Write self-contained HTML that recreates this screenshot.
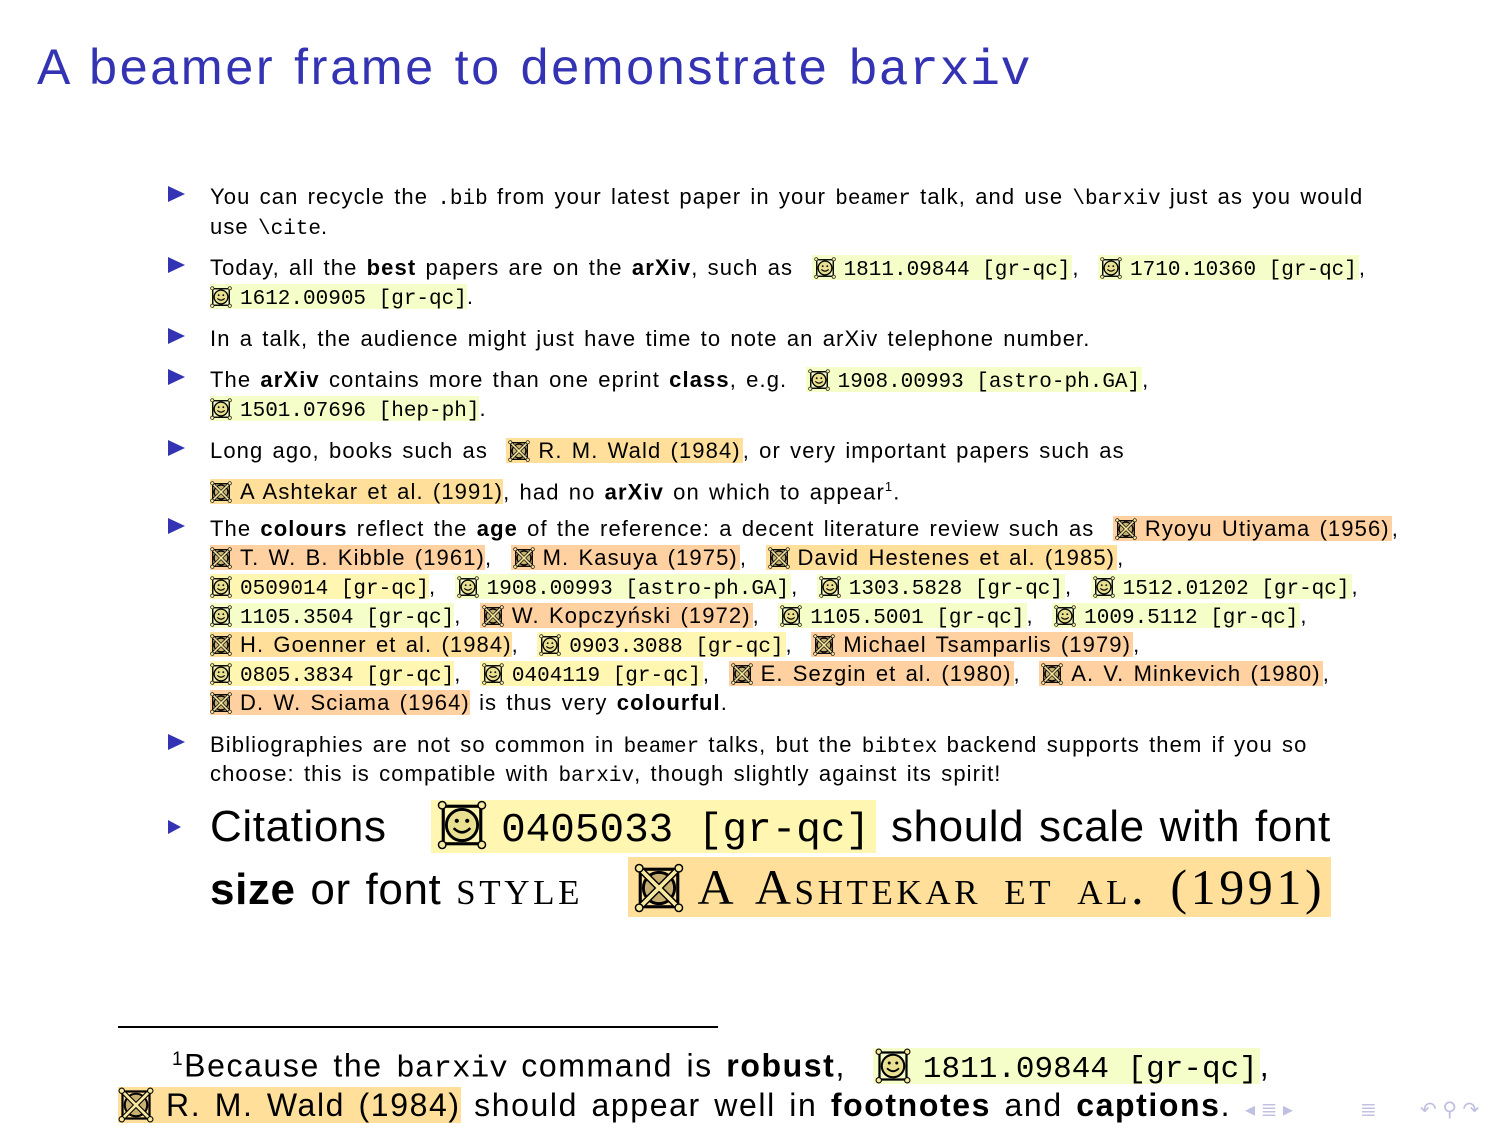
<!DOCTYPE html>
<html><head><meta charset="utf-8"><style>
body{margin:0;width:1512px;height:1134px;background:#fff;position:relative;overflow:hidden;font-family:"Liberation Sans",sans-serif;color:#000}
.t{position:absolute;left:37px;top:38px;font-size:50px;color:#3333b3;white-space:nowrap;letter-spacing:2.8px;word-spacing:2px}
.t .m{letter-spacing:0.5px}
.m{font-family:"Liberation Mono",monospace;letter-spacing:0;word-spacing:0}
.l{position:absolute;left:210px;white-space:nowrap;font-size:22px;line-height:26px;letter-spacing:1.1px;word-spacing:2px}
.l .m{font-size:21px}
.b{position:absolute;left:168px;width:0;height:0;border-top:8px solid transparent;border-bottom:8px solid transparent;border-left:17px solid #3333b3}
.hg{background:#f5fec8}.hy{background:#fff6b2}.ho{background:#ffdf9a}.hp{background:#ffd0a0}
.h{padding:0 2px}
svg.i{width:22px;height:22px;vertical-align:-4px;margin-right:8px}
.big{font-size:44px;line-height:56px;letter-spacing:0.6px}
.big .m{font-size:41px}
.big svg.i{width:50px;height:50px;vertical-align:-9px;margin-right:14px}
.fn{font-size:32px;line-height:40px;letter-spacing:1.6px;word-spacing:3px}
.fn .m{font-size:31px}
.fn svg.i{width:36px;height:36px;vertical-align:-7px;margin-right:12px}
.sc{font-family:"Liberation Serif",serif;font-size:50px;letter-spacing:3.6px;word-spacing:7px}
.nav{position:absolute;top:1097px;color:#c0c0e0;font-size:20px}
</style></head><body>
<svg width="0" height="0" style="position:absolute">
<symbol id="s" viewBox="0 0 24 24"><rect x="3" y="3" width="18" height="18" fill="none" stroke="#000" stroke-width="1.5"/><circle cx="12" cy="12" r="7.5" fill="#e8e090" stroke="#000" stroke-width="1.4"/><circle cx="9.5" cy="10" r="1" fill="#000"/><circle cx="14.5" cy="10" r="1" fill="#000"/><path d="M8 13.5Q12 17.5 16 13.5" fill="none" stroke="#000" stroke-width="1.2"/><g fill="#f7e9a0" stroke="#000" stroke-width=".7"><circle cx="2.5" cy="2.5" r="1.8"/><circle cx="21.5" cy="2.5" r="1.8"/><circle cx="2.5" cy="21.5" r="1.8"/><circle cx="21.5" cy="21.5" r="1.8"/></g></symbol>
<symbol id="x" viewBox="0 0 24 24"><rect x="3" y="3" width="18" height="18" fill="none" stroke="#000" stroke-width="1.5"/><circle cx="12" cy="12" r="7.5" fill="#c8b070" stroke="#000" stroke-width="1.4"/><path d="M2.5 2.5L21.5 21.5M21.5 2.5L2.5 21.5" stroke="#000" stroke-width="3.2"/><path d="M2.5 2.5L21.5 21.5M21.5 2.5L2.5 21.5" stroke="#f7e9a0" stroke-width="1.8"/><g fill="#f7e9a0" stroke="#000" stroke-width=".7"><circle cx="2.5" cy="2.5" r="1.8"/><circle cx="21.5" cy="2.5" r="1.8"/><circle cx="2.5" cy="21.5" r="1.8"/><circle cx="21.5" cy="21.5" r="1.8"/></g></symbol>
</svg>
<div class="t">A beamer frame to demonstrate <span class="m">barxiv</span></div>

<div class="b" style="top:186px"></div>
<div class="l" style="top:184px">You can recycle the <span class="m">.bib</span> from your latest paper in your <span class="m">beamer</span> talk, and use <span class="m">\barxiv</span> just as you would</div>
<div class="l" style="top:214px">use <span class="m">\cite</span>.</div>

<div class="b" style="top:257px"></div>
<div class="l" style="top:255px">Today, all the <b>best</b> papers are on the <b>arXiv</b>, such as &nbsp;<span class="h hg"><svg class="i"><use href="#s"/></svg><span class="m">1811.09844 [gr-qc]</span></span>, &nbsp;<span class="h hg"><svg class="i"><use href="#s"/></svg><span class="m">1710.10360 [gr-qc]</span></span>,</div>
<div class="l" style="top:284px"><span class="hg"><svg class="i"><use href="#s"/></svg><span class="m">1612.00905 [gr-qc]</span></span>.</div>

<div class="b" style="top:328px"></div>
<div class="l" style="top:326px">In a talk, the audience might just have time to note an arXiv telephone number.</div>

<div class="b" style="top:369px"></div>
<div class="l" style="top:367px">The <b>arXiv</b> contains more than one eprint <b>class</b>, e.g. &nbsp;<span class="h hg"><svg class="i"><use href="#s"/></svg><span class="m">1908.00993 [astro-ph.GA]</span></span>,</div>
<div class="l" style="top:396px"><span class="hg"><svg class="i"><use href="#s"/></svg><span class="m">1501.07696 [hep-ph]</span></span>.</div>

<div class="b" style="top:440px"></div>
<div class="l" style="top:438px">Long ago, books such as &nbsp;<span class="h ho"><svg class="i"><use href="#x"/></svg>R. M. Wald (1984)</span>, or very important papers such as</div>
<div class="l" style="top:474px"><span class="ho"><svg class="i"><use href="#x"/></svg>A Ashtekar et al. (1991)</span>, had no <b>arXiv</b> on which to appear<sup style="font-size:13px">1</sup>.</div>

<div class="b" style="top:518px"></div>
<div class="l" style="top:516px">The <b>colours</b> reflect the <b>age</b> of the reference: a decent literature review such as &nbsp;<span class="h hp"><svg class="i"><use href="#x"/></svg>Ryoyu Utiyama (1956)</span>,</div>
<div class="l" style="top:545px"><span class="hp"><svg class="i"><use href="#x"/></svg>T. W. B. Kibble (1961)</span>, &nbsp;<span class="h hp"><svg class="i"><use href="#x"/></svg>M. Kasuya (1975)</span>, &nbsp;<span class="h ho"><svg class="i"><use href="#x"/></svg>David Hestenes et al. (1985)</span>,</div>
<div class="l" style="top:574px"><span class="hy"><svg class="i"><use href="#s"/></svg><span class="m">0509014 [gr-qc]</span></span>, &nbsp;<span class="h hg"><svg class="i"><use href="#s"/></svg><span class="m">1908.00993 [astro-ph.GA]</span></span>, &nbsp;<span class="h hg"><svg class="i"><use href="#s"/></svg><span class="m">1303.5828 [gr-qc]</span></span>, &nbsp;<span class="h hg"><svg class="i"><use href="#s"/></svg><span class="m">1512.01202 [gr-qc]</span></span>,</div>
<div class="l" style="top:603px"><span class="hg"><svg class="i"><use href="#s"/></svg><span class="m">1105.3504 [gr-qc]</span></span>, &nbsp;<span class="h hp"><svg class="i"><use href="#x"/></svg>W. Kopczyński (1972)</span>, &nbsp;<span class="h hg"><svg class="i"><use href="#s"/></svg><span class="m">1105.5001 [gr-qc]</span></span>, &nbsp;<span class="h hg"><svg class="i"><use href="#s"/></svg><span class="m">1009.5112 [gr-qc]</span></span>,</div>
<div class="l" style="top:632px"><span class="ho"><svg class="i"><use href="#x"/></svg>H. Goenner et al. (1984)</span>, &nbsp;<span class="h hy"><svg class="i"><use href="#s"/></svg><span class="m">0903.3088 [gr-qc]</span></span>, &nbsp;<span class="h hp"><svg class="i"><use href="#x"/></svg>Michael Tsamparlis (1979)</span>,</div>
<div class="l" style="top:661px"><span class="hy"><svg class="i"><use href="#s"/></svg><span class="m">0805.3834 [gr-qc]</span></span>, &nbsp;<span class="h hy"><svg class="i"><use href="#s"/></svg><span class="m">0404119 [gr-qc]</span></span>, &nbsp;<span class="h hp"><svg class="i"><use href="#x"/></svg>E. Sezgin et al. (1980)</span>, &nbsp;<span class="h hp"><svg class="i"><use href="#x"/></svg>A. V. Minkevich (1980)</span>,</div>
<div class="l" style="top:690px"><span class="hp"><svg class="i"><use href="#x"/></svg>D. W. Sciama (1964)</span> is thus very <b>colourful</b>.</div>

<div class="b" style="top:734px"></div>
<div class="l" style="top:732px">Bibliographies are not so common in <span class="m">beamer</span> talks, but the <span class="m">bibtex</span> backend supports them if you so</div>
<div class="l" style="top:761px">choose: this is compatible with <span class="m">barxiv</span>, though slightly against its spirit!</div>

<div class="b" style="top:820px;border-top-width:7px;border-bottom-width:7px;border-left-width:13px"></div>
<div class="l big" style="top:799px">Citations &nbsp;&nbsp;<span class="h hy" style="padding:2px 6px"><svg class="i"><use href="#s"/></svg><span class="m">0405033 [gr-qc]</span></span> should scale with font</div>
<div class="l big" style="top:859px"><b>size</b> or font <span class="sc" style="font-variant:small-caps">style</span> &nbsp;&nbsp;<span class="h ho sc" style="padding:2px 6px;font-variant:small-caps"><svg class="i"><use href="#x"/></svg>A Ashtekar et al. (1991)</span></div>

<div style="position:absolute;left:118px;top:1026px;width:600px;height:2px;background:#000"></div>
<div class="l fn" style="left:172px;top:1040px"><sup style="font-size:19px">1</sup>Because the <span class="m">barxiv</span> command is <b>robust</b>, &nbsp;<span class="h hg"><svg class="i"><use href="#s"/></svg><span class="m">1811.09844 [gr-qc]</span></span>,</div>
<div class="l fn" style="left:118px;top:1085px"><span class="ho"><svg class="i"><use href="#x"/></svg>R. M. Wald (1984)</span> should appear well in <b>footnotes</b> and <b>captions</b>.</div>
<div class="nav" style="left:1245px">◂ ≣ ▸</div>
<div class="nav" style="left:1360px">≣</div>
<div class="nav" style="left:1420px">↶ ⚲ ↷</div>
</body></html>
